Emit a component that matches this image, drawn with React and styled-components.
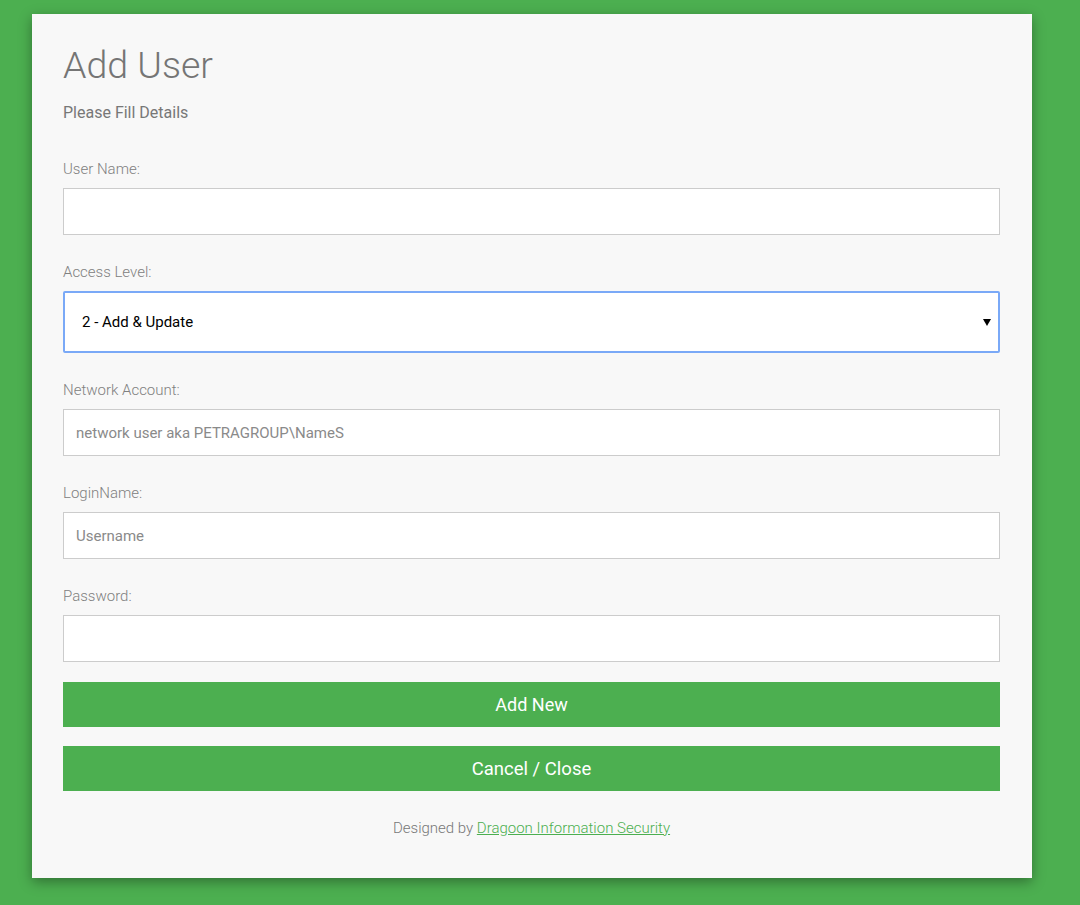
import React, { useState } from 'react';
import styled, { createGlobalStyle } from 'styled-components';

const GlobalStyle = createGlobalStyle`
  body {
    margin: 0;
    background: #4caf50;
    font-family: Roboto, "Liberation Sans", sans-serif;
  }
`;

const fields = [
  { id: 'username', label: 'User Name:', placeholder: '' },
  { id: 'network', label: 'Network Account:', placeholder: 'network user aka PETRAGROUP\\NameS' },
  { id: 'login', label: 'LoginName:', placeholder: 'Username' },
  { id: 'password', label: 'Password:', placeholder: '', type: 'password' },
];

const App = () => {
  const [level, setLevel] = useState('2');

  const renderField = (field) => (
    <Field key={field.id}>
      <Label htmlFor={field.id}>{field.label}</Label>
      <TextInput id={field.id} type={field.type || 'text'} placeholder={field.placeholder} />
    </Field>
  );

  return (
    <>
      <GlobalStyle />
      <Card>
        <Title>Add User</Title>
        <SubTitle>Please Fill Details</SubTitle>
        <Form>
          {renderField(fields[0])}
          <Field>
            <Label htmlFor="level">Access Level:</Label>
            <SelectWrap>
              <Select id="level" value={level} onChange={(e) => setLevel(e.target.value)}>
                <option value="1">1 - Read Only</option>
                <option value="2">2 - Add &amp; Update</option>
                <option value="3">3 - Full Access</option>
              </Select>
              <Arrow width="8" height="7" viewBox="0 0 8 7">
                <path d="M0 0 H8 L4 7 Z" fill="#000" />
              </Arrow>
            </SelectWrap>
          </Field>
          {fields.slice(1).map(renderField)}
          <Button type="button">Add New</Button>
          <Button type="button" $big>Cancel / Close</Button>
        </Form>
        <Footer>
          Designed by <FooterLink href="#">Dragoon Information Security</FooterLink>
        </Footer>
      </Card>
    </>
  );
};

const Card = styled.div`
  width: 1000px;
  box-sizing: border-box;
  margin: 14px 0 27px 32px;
  padding: 28px 32px 41px 31px;
  background: #f8f8f8;
  box-shadow: 0 4px 12px rgba(0, 0, 0, 0.35);
`;

const Title = styled.h1`
  margin: 0;
  font-size: 37.5px;
  font-weight: 300;
  line-height: 46px;
  color: #757575;
`;

const SubTitle = styled.p`
  margin: 14px 0 35px;
  font-size: 16px;
  line-height: 22px;
  color: #777;
`;

const Form = styled.form`
  display: flex;
  flex-direction: column;
`;

const Field = styled.div`
  display: flex;
  flex-direction: column;
  margin-bottom: 27px;

  &:nth-last-child(3) {
    margin-bottom: 20px;
  }
`;

const Label = styled.label`
  font-size: 15px;
  font-weight: 300;
  line-height: 20px;
  color: #808080;
  margin-bottom: 9px;
`;

const TextInput = styled.input`
  box-sizing: border-box;
  width: 100%;
  height: 47px;
  padding: 0 12px;
  border: 1px solid #cccccc;
  background: #fff;
  font-family: Roboto, "Liberation Sans", sans-serif;
  font-size: 15px;
  color: #333;
  outline: none;

  &::placeholder {
    color: #8a8a8a;
  }
`;

const SelectWrap = styled.div`
  position: relative;
`;

const Select = styled.select`
  box-sizing: border-box;
  width: 100%;
  height: 62px;
  padding: 0 17px;
  border: 2px solid #7aa9f7;
  border-radius: 2px;
  background: #fff;
  font-family: Roboto, "Liberation Sans", sans-serif;
  font-size: 15px;
  color: #000;
  appearance: none;
  outline: none;
`;

const Arrow = styled.svg`
  position: absolute;
  right: 9px;
  top: 28px;
  pointer-events: none;
`;

const Button = styled.button`
  height: 45px;
  margin-bottom: 19px;
  border: none;
  background: #4caf50;
  color: #fff;
  font-family: Roboto, "Liberation Sans", sans-serif;
  font-size: ${(p) => (p.$big ? '18.5px' : '18px')};
  cursor: pointer;
`;

const Footer = styled.div`
  margin-top: 9px;
  text-align: center;
  font-size: 15px;
  font-weight: 300;
  line-height: 18px;
  color: #777;
`;

const FooterLink = styled.a`
  color: #4caf50;
  text-decoration: underline;
`;

export default App;
